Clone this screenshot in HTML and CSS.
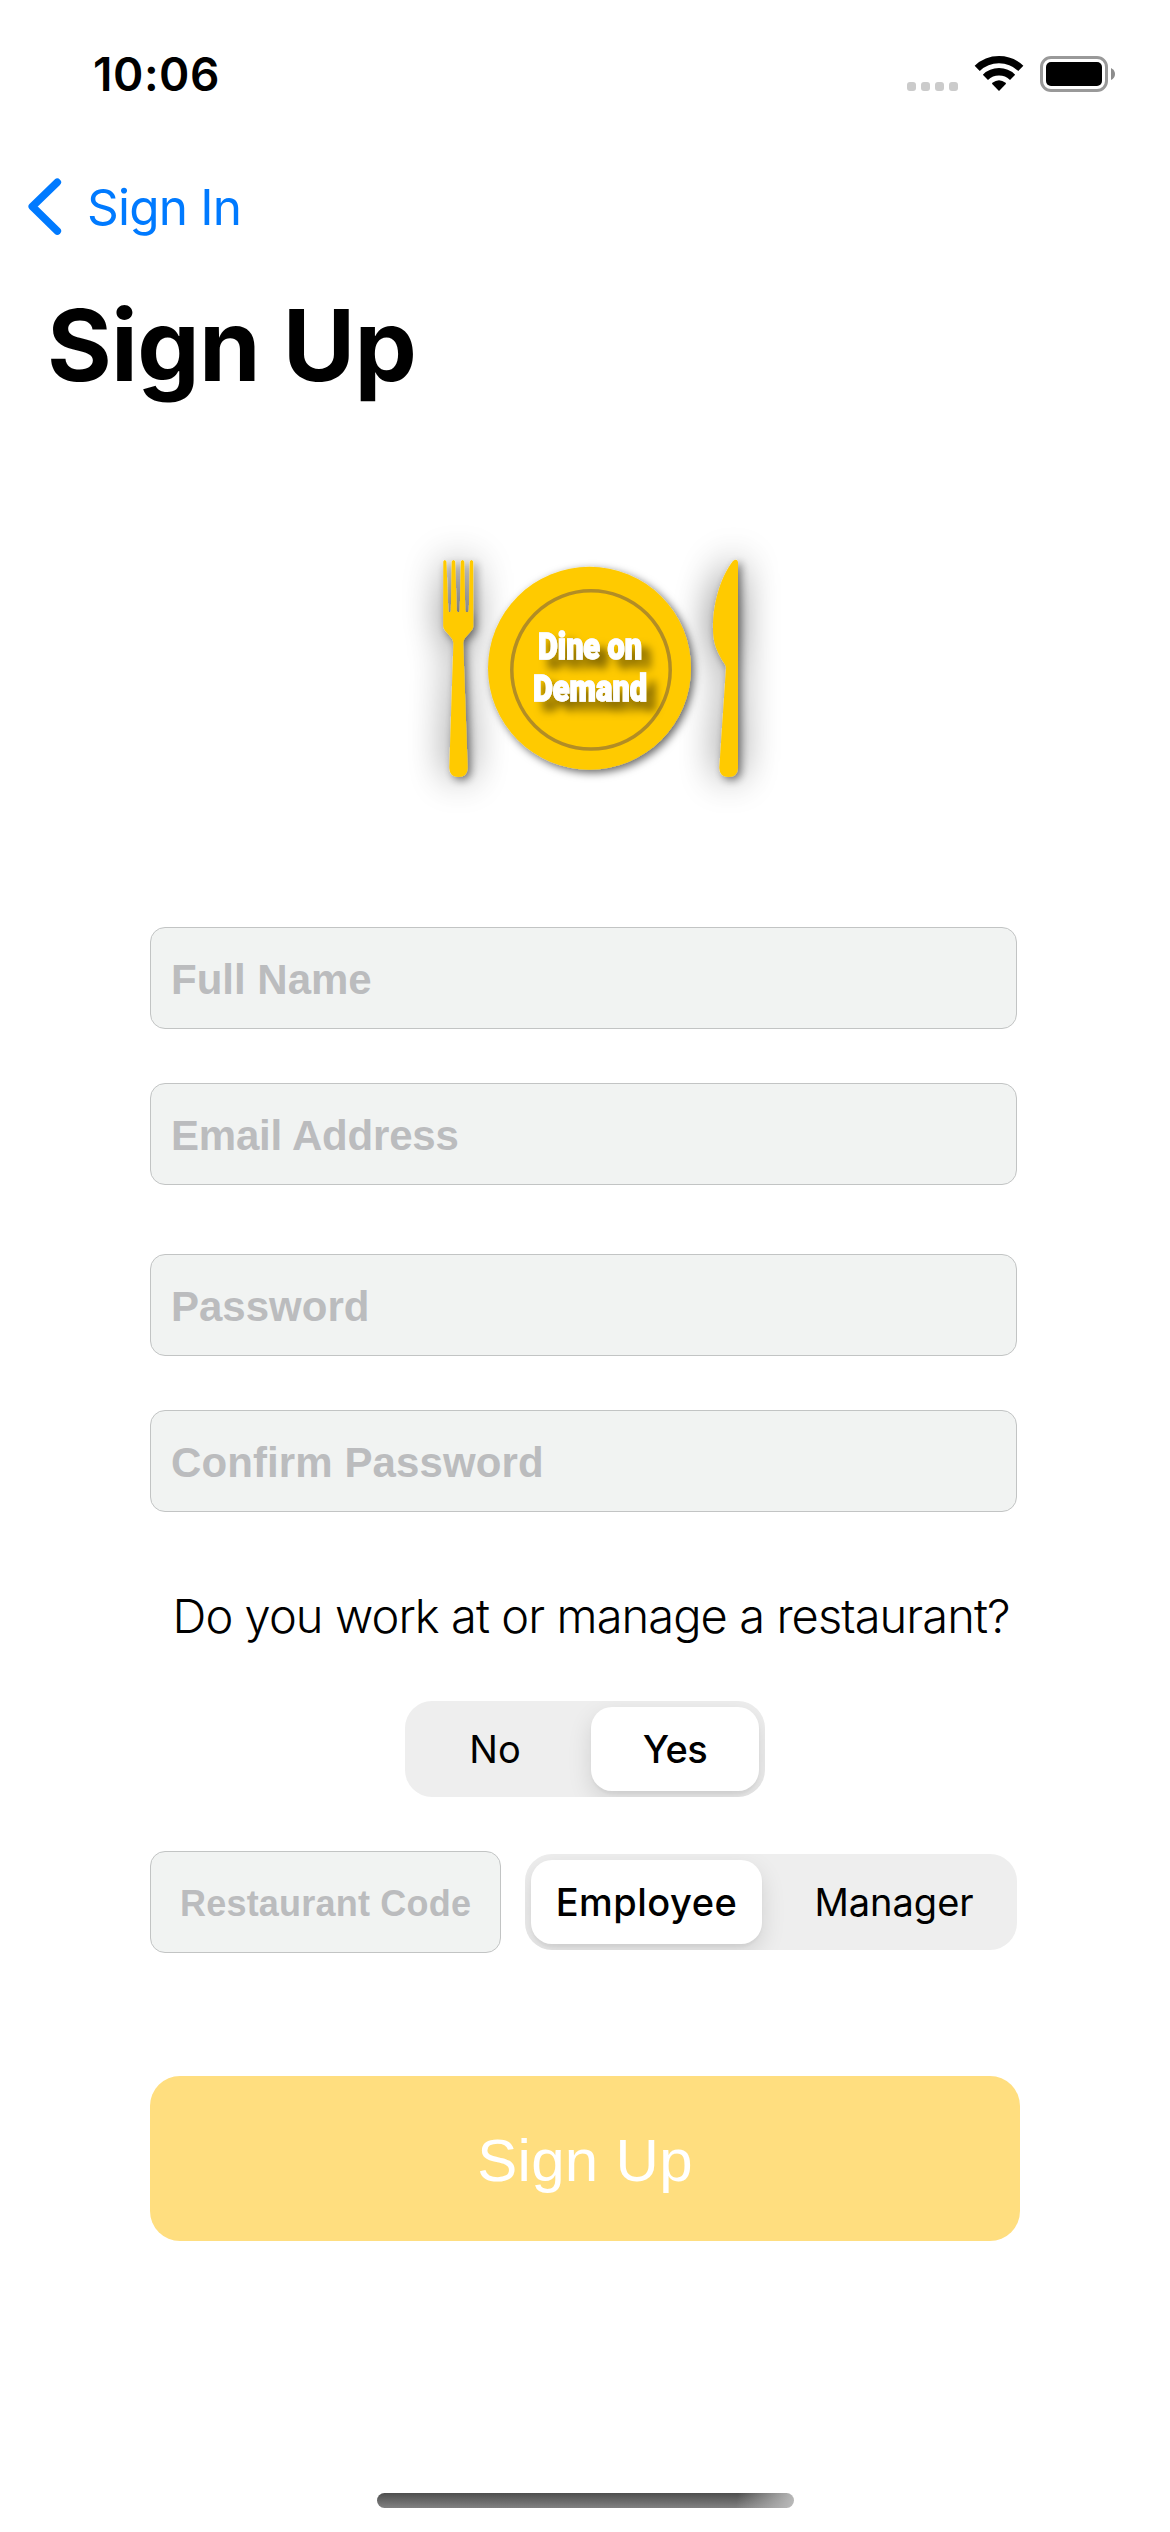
FILE: index.html
```
<!DOCTYPE html>
<html lang="en">
<head>
<meta charset="utf-8">
<title>Sign Up</title>
<link rel="stylesheet" href="styles.css">
</head>
<body>
<header class="status">
  <span class="time">10:06</span>
  <svg class="status-icons" width="210" height="40" viewBox="0 0 210 40">
    <g fill="#cbcbcb">
      <rect x="0" y="27" width="9" height="9" rx="3"/>
      <rect x="14" y="27" width="9" height="9" rx="3"/>
      <rect x="28" y="27" width="9" height="9" rx="3"/>
      <rect x="42" y="27" width="9" height="9" rx="3"/>
    </g>
    <g fill="none" stroke="#000" stroke-width="7.4">
      <path d="M70.200 13.400A31.500 31.500 0 0 1 113.800 13.400"/>
      <path d="M78.400 22.300A19.500 19.500 0 0 1 105.600 22.300"/>
    </g>
    <path d="M85.200 28.900Q84.800 28.300 85.400 27.700Q92 22.600 98.600 27.700Q99.200 28.300 98.800 28.900L92 36Z"/>
    <rect x="134.500" y="2.500" width="65" height="33" rx="9.500" fill="none" stroke="#999" stroke-width="3"/>
    <rect x="139" y="7" width="56" height="24" rx="5"/>
    <path d="M204 13Q208 15 208 19Q208 23 204 25Z" fill="#8c8c8c"/>
  </svg>
</header>
<nav class="nav">
  <svg width="35" height="58" viewBox="0 0 35 58"><path d="M30.300 4.300L5.300 28.500L30.300 53" fill="none" stroke="#007aff" stroke-width="7.600" stroke-linecap="round" stroke-linejoin="round"/></svg>
  <span class="back">Sign In</span>
</nav>
<h1 class="title">Sign Up</h1>

<svg class="logo" width="390" height="300" viewBox="0 0 390 300">
  <defs>
    <filter id="halo" x="-250%" y="-30%" width="600%" height="160%">
      <feDropShadow dx="3" dy="3" stdDeviation="4" flood-opacity=".5" result="near"/>
      <feGaussianBlur in="SourceAlpha" stdDeviation="19" result="wide"/>
      <feComponentTransfer in="wide" result="far"><feFuncA type="linear" slope=".6"/></feComponentTransfer>
      <feMerge><feMergeNode in="far"/><feMergeNode in="near"/></feMerge>
    </filter>
    <filter id="plate-shadow" x="-20%" y="-20%" width="140%" height="140%">
      <feDropShadow dx="3" dy="3" stdDeviation="4.500" flood-opacity=".6"/>
    </filter>
    <filter id="text-shadow" x="-30%" y="-50%" width="170%" height="220%">
      <feDropShadow dx="9" dy="9" stdDeviation="4.500" flood-opacity=".5" result="soft"/>
      <feDropShadow in="SourceGraphic" dx="0" dy="0" stdDeviation=".7" flood-opacity=".4" result="edge"/>
      <feMerge><feMergeNode in="soft"/><feMergeNode in="edge"/></feMerge>
    </filter>
  </defs>
  <g fill="#ffca05">
    <path filter="url(#halo)" d="M43.300 41.500Q44.700 38.500 46.400 41.500L48.300 90Q48.400 92.300 49.600 92.300Q50.800 92.300 50.900 90L51.700 41.500Q53.500 38.500 55.200 41.500L56.700 90Q56.800 92.300 58.200 92.300Q59.700 92.300 59.800 90L60.800 41.500Q62.600 38.500 64.300 41.500L65.200 90Q65.400 92.300 67 92.300Q68.800 92.300 68.900 90L69.800 41.500Q71.500 38.500 73.200 41.500V107Q72.800 109 71.500 110.500L65 118Q63.200 120 63.200 123L67.700 248Q67.300 257 58.500 257Q49.700 257 49.300 248L53.400 123Q53.300 120 51.500 118L45 110.500Q43.300 108.500 43.200 106Z"/>
    <path filter="url(#halo)" d="M338 42V248Q337.500 257 328.500 257Q319.700 257 319.300 248L326 148Q326 146 325 144.500C316 131 313 122 313 108C313 80 322 55 333 41Q337 38 338 42Z"/>
    <circle cx="189.500" cy="148.200" r="101.500" filter="url(#plate-shadow)"/>
  </g>
  <circle cx="191" cy="149.900" r="79.200" fill="none" stroke="#b28d25" stroke-width="3.500"/>
  <g class="logo-text" filter="url(#text-shadow)">
    <text x="138" y="139.300" textLength="104" lengthAdjust="spacingAndGlyphs">Dine on</text>
    <text x="133" y="180.500" textLength="114" lengthAdjust="spacingAndGlyphs">Demand</text>
  </g>
</svg>

<main class="form">
  <div class="field">Full Name</div>
  <div class="field email">Email Address</div>
  <div class="field password">Password</div>
  <div class="field confirm">Confirm Password</div>
  <p class="question">Do you work at or manage a restaurant?</p>
  <div class="segmented answer">
    <span class="segment">No</span>
    <span class="segment selected yes">Yes</span>
  </div>
  <div class="row">
    <div class="field code">Restaurant Code</div>
    <div class="segmented role">
      <span class="segment selected">Employee</span>
      <span class="segment">Manager</span>
    </div>
  </div>
  <button class="submit">Sign Up</button>
</main>
<div class="home"></div>
</body>
</html>
```
FILE: styles.css
```
* { box-sizing: border-box; }

body {
  margin: 0;
  width: 1170px;
  height: 2532px;
  overflow: hidden;
  background: #fff;
  color: #000;
  font-family: Inter, "Liberation Sans", sans-serif;
}

.status {
  display: flex;
  justify-content: space-between;
  height: 132px;
  padding: 54px 53px 0 93px;
}

.status-icons { margin-top: 1px; }

.time {
  font-size: 46px;
  font-weight: 600;
  line-height: 41px;
  letter-spacing: 0.55px;
}

.nav {
  display: flex;
  align-items: center;
  gap: 25px;
  height: 150px;
  padding-left: 27px;
}

.back {
  color: #007aff;
  font-size: 49.5px;
  letter-spacing: -0.8px;
}

.title {
  margin: 0;
  padding-left: 47px;
  font-size: 99px;
  font-weight: 700;
  line-height: 126px;
  letter-spacing: -0.7px;
}

.logo {
  display: block;
  margin: 112px 0 107px 400px;
  overflow: visible;
}

.logo-text {
  fill: #fff;
  stroke: #fff;
  stroke-width: 1.3px;
  font-family: Roboto, sans-serif;
  font-size: 37px;
  font-weight: 900;
}

.form {
  display: flex;
  flex-direction: column;
  width: 870px;
  margin-left: 150px;
}

.field {
  display: flex;
  align-items: center;
  width: 867px;
  height: 102px;
  padding: 3px 20px 0;
  border: 1px solid #c2c4c4;
  border-radius: 15px;
  background: #f1f3f2;
  color: #bbbcbe;
  font: 700 42px "Liberation Sans", sans-serif;
}

.email {
  margin-top: 54px;
  letter-spacing: -0.2px;
}

.password { margin-top: 69px; }

.confirm {
  margin-top: 54px;
  letter-spacing: 0.1px;
}

.question {
  margin: 74px 0 55px;
  padding-left: 22.5px;
  font-size: 47px;
  font-weight: 300;
  line-height: 60px;
  letter-spacing: -0.92px;
  white-space: nowrap;
}

.segmented {
  display: grid;
  height: 96px;
  padding: 6px;
  border-radius: 27px;
  background: #eee;
  font-size: 38px;
  overflow: hidden;
}

.segment {
  display: flex;
  align-items: center;
  justify-content: center;
  border-radius: 21px;
}

.selected {
  background: #fff;
  box-shadow: 0 9px 24px rgba(0, 0, 0, 0.12), 0 3px 3px rgba(0, 0, 0, 0.04);
  font-weight: 500;
  letter-spacing: 0.5px;
}

.answer {
  grid-template-columns: 168px 168px;
  justify-content: space-between;
  width: 360px;
  margin-left: 255px;
}

.yes { letter-spacing: -0.5px; }

.row {
  display: flex;
  align-items: center;
  gap: 24px;
  margin-top: 54px;
}

.code {
  width: 351px;
  padding-left: 29px;
  padding-right: 0;
  font-size: 36px;
  letter-spacing: 0.21px;
  white-space: nowrap;
}

.role {
  grid-template-columns: 231px 234px;
  justify-content: space-between;
  width: 492px;
}

.submit {
  width: 870px;
  height: 165px;
  margin-top: 123px;
  padding: 3px 0 0;
  border: 0;
  border-radius: 30px;
  background: #ffde7f;
  color: #fff;
  font: 400 60px "Liberation Sans", sans-serif;
  letter-spacing: 0.32px;
}

.home {
  width: 417px;
  height: 15px;
  margin: 252px 0 0 377px;
  border-radius: 8px;
  background:
    linear-gradient(100deg, rgba(190, 190, 190, 0) 86%, #bbb 100%),
    linear-gradient(#4e4e4e, #818181);
}
```
